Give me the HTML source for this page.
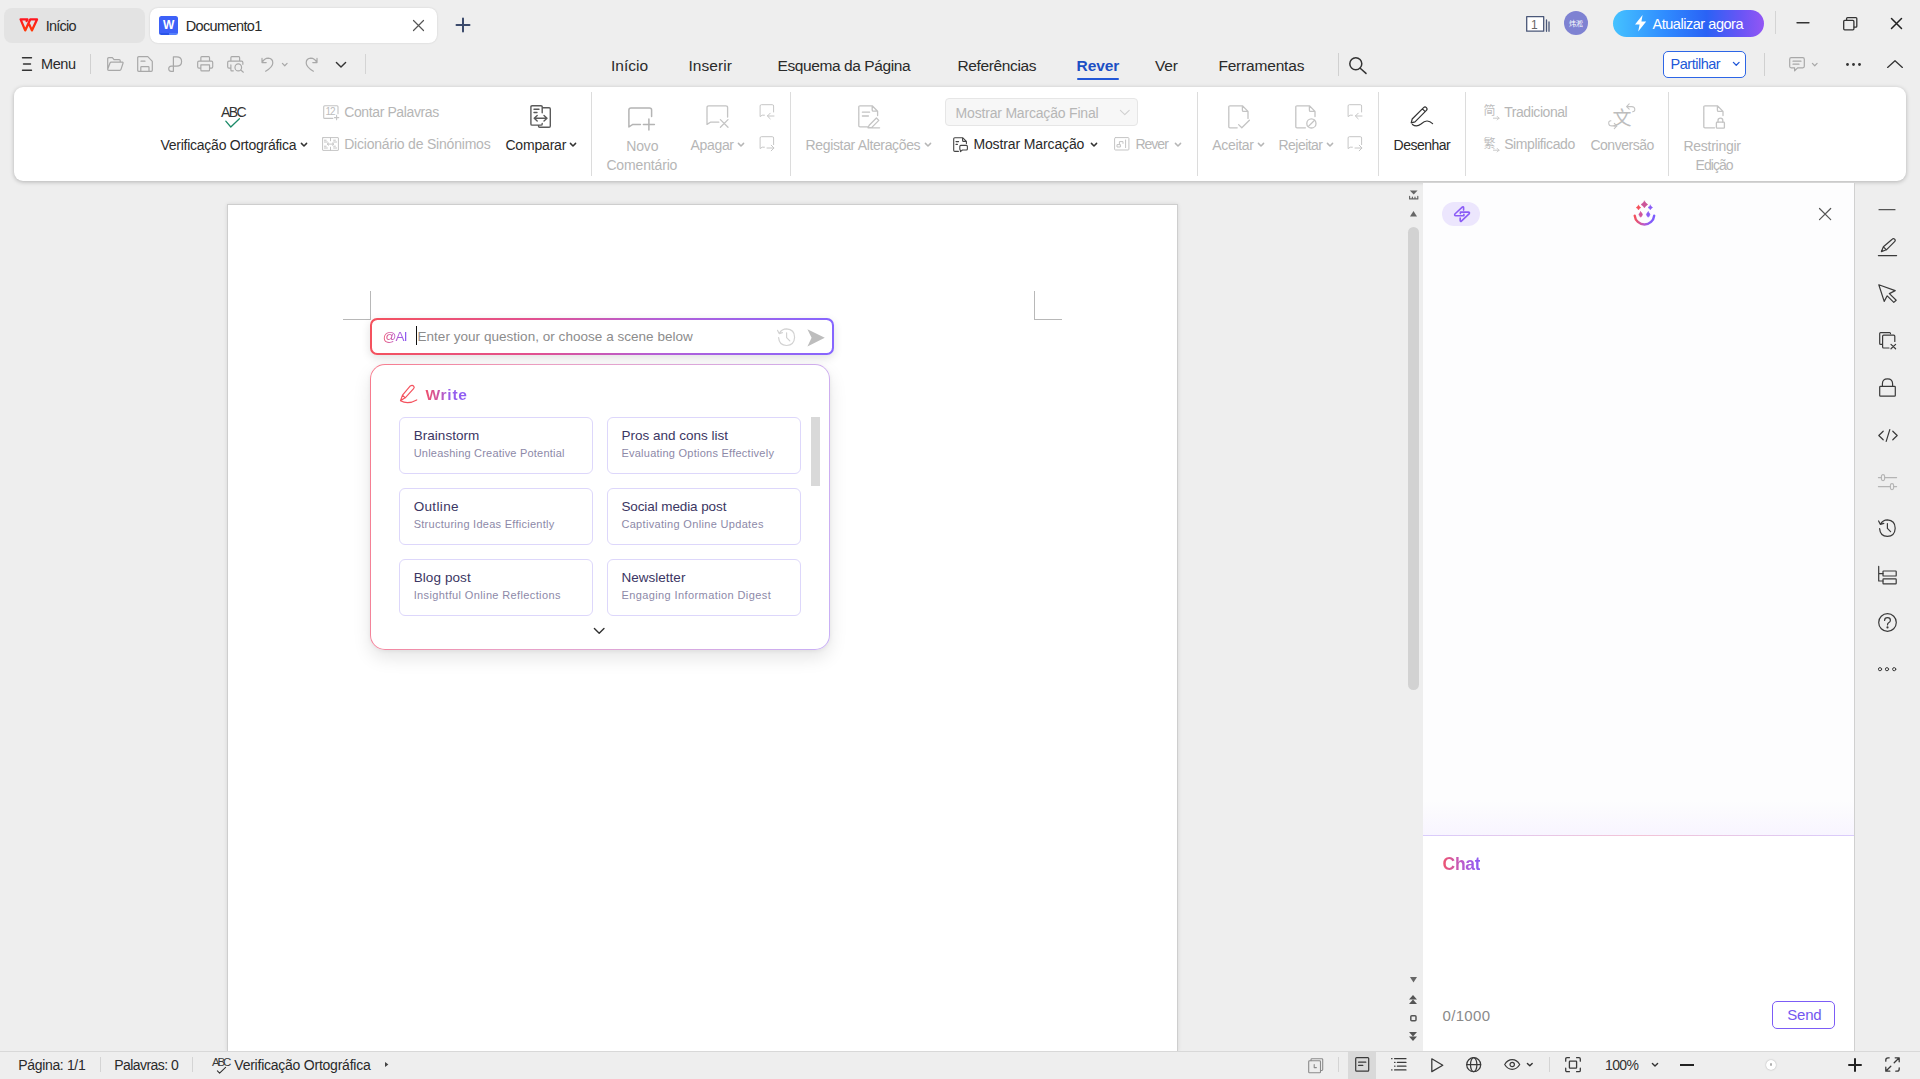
<!DOCTYPE html>
<html lang="pt">
<head>
<meta charset="utf-8">
<title>Documento1</title>
<style>
*{box-sizing:border-box;margin:0;padding:0}
html,body{width:1920px;height:1079px;overflow:hidden;background:#eeeeee;font-family:"Liberation Sans","Noto Sans CJK SC",sans-serif;color:#1f1f1f}
.abs{position:absolute}
.t{position:absolute;white-space:nowrap}
svg{position:absolute;overflow:visible}
.grad{background:linear-gradient(90deg,#ee5470 0%,#b85bd0 55%,#8a5cf6 100%);-webkit-background-clip:text;background-clip:text;color:transparent !important}
</style>
</head>
<body>
<!-- title bar -->
<div class="abs" style="left:4.0px;top:8.0px;width:141.0px;height:35.0px;background:#e3e3e3;border-radius:8px"></div>
<div class="abs" style="left:150.0px;top:8.0px;width:287.0px;height:35.0px;background:#fff;border-radius:8px;box-shadow:0 0 2px rgba(0,0,0,.15)"></div>
<svg style="left:19.0px;top:18.0px" width="19.5" height="14" viewBox="0 0 19.5 14" fill="none" stroke="url(#wg)" stroke-width="2.3" stroke-linecap="round" stroke-linejoin="round" ><defs><linearGradient id="wg" x1="0" y1="0" x2="0" y2="1"><stop offset="0" stop-color="#ff1720"/><stop offset="1" stop-color="#ff3a0a"/></linearGradient></defs><path d="M7.6 3 L8.4 1.4 H1.6 L6.2 12.4 L11.2 1.4 H18 L12.9 12.4 L10.2 6.4"/></svg>
<div class="t" style="left:45.7px;top:18.73px;font-size:14.50px;height:14.50px;line-height:14.50px;color:#2a2a2a;letter-spacing:-0.771px;">Início</div>
<div class="abs" style="left:159.0px;top:16.0px;width:19.0px;height:19.0px;background:linear-gradient(180deg,#3d61f8 0%,#3d61f8 90%,transparent 90%),linear-gradient(90deg,#2a55e8 0%,#2a55e8 52%,#5580fa 52%,#5580fa 100%);border-radius:2.5px"></div>
<div class="t" style="left:163.0px;top:18.84px;font-size:12.00px;height:12.00px;line-height:12.00px;color:#fff;font-weight:700;">W</div>
<div class="t" style="left:185.7px;top:18.73px;font-size:14.50px;height:14.50px;line-height:14.50px;color:#2a2a2a;letter-spacing:-0.623px;">Documento1</div>
<svg style="left:413.0px;top:19.5px" width="11" height="11" viewBox="0 0 11 11" fill="none" stroke="#555" stroke-width="1.2" stroke-linecap="round" stroke-linejoin="round" ><path d="M0.5 0.5 L10.5 10.5 M10.5 0.5 L0.5 10.5"/></svg>
<svg style="left:456.0px;top:18.0px" width="14" height="14" viewBox="0 0 14 14" fill="none" stroke="#3b4a6b" stroke-width="2" stroke-linecap="round" stroke-linejoin="round" ><path d="M7 0.5 V13.5 M0.5 7 H13.5"/></svg>
<svg style="left:1526.0px;top:16.0px" width="24" height="16" viewBox="0 0 24 16" fill="none" stroke="#4a5778" stroke-width="1.3" stroke-linecap="round" stroke-linejoin="round" ><rect x="0.7" y="0.7" width="17" height="14.5" fill="#fff"/><path d="M20.5 4 V15.3 M23 6 V15.3" /></svg>
<div class="t" style="left:1531.0px;top:18.84px;font-size:12.00px;height:12.00px;line-height:12.00px;color:#666;">1</div>
<div class="abs" style="left:1564.0px;top:11.0px;width:24.0px;height:24.0px;background:#7e82d2;border-radius:50%"></div>
<div class="t" style="left:1569.0px;top:20.07px;font-size:7.00px;height:7.00px;line-height:7.00px;color:#fff;font-family:"Noto Sans CJK SC",sans-serif;">炜淞</div>
<div class="abs" style="left:1613.0px;top:10.0px;width:151.0px;height:27.0px;border-radius:14px;background:linear-gradient(90deg,#45c2ff 0%,#2f8bff 35%,#2a62f5 62%,#6a55f5 85%,#9356f4 100%)"></div>
<svg style="left:1634.0px;top:15.0px" width="13" height="16.5" viewBox="0 0 13 16.5" fill="none" stroke="none" stroke-width="1.2" stroke-linecap="round" stroke-linejoin="round" ><path d="M8.6 0 L1 9.4 H5.6 L4.2 16.5 L12.2 6.6 H7.4 Z" fill="#fff" stroke="none"/></svg>
<div class="t" style="left:1652.5px;top:16.73px;font-size:14.50px;height:14.50px;line-height:14.50px;color:#fff;letter-spacing:-0.466px;">Atualizar agora</div>
<div class="abs" style="left:1775.0px;top:11.0px;width:1.0px;height:23.0px;background:#d4d4d4"></div>
<svg style="left:1796.5px;top:22.0px" width="12" height="1.4" viewBox="0 0 12 1.4" fill="none" stroke="#333" stroke-width="1.4" stroke-linecap="round" stroke-linejoin="round" ><path d="M0 0.7 H12"/></svg>
<svg style="left:1842.5px;top:16.5px" width="14.5" height="13.5" viewBox="0 0 14.5 13.5" fill="none" stroke="#333" stroke-width="1.3" stroke-linecap="round" stroke-linejoin="round" ><path d="M3.6 3.2 V1.6 Q3.6 0.7 4.5 0.7 H12.9 Q13.8 0.7 13.8 1.6 V9.2 Q13.8 10.1 12.9 10.1 H11.2"/><rect x="0.7" y="3.4" width="10.2" height="9.4" rx="1"/></svg>
<svg style="left:1891.0px;top:18.0px" width="11" height="11" viewBox="0 0 11 11" fill="none" stroke="#222" stroke-width="1.5" stroke-linecap="round" stroke-linejoin="round" ><path d="M0.5 0.5 L10.5 10.5 M10.5 0.5 L0.5 10.5"/></svg>
<!-- menu row -->
<svg style="left:22.0px;top:56.5px" width="10" height="14" viewBox="0 0 10 14" fill="none" stroke="#333" stroke-width="1.4" stroke-linecap="round" stroke-linejoin="round" ><path d="M0.5 0.7 H9.5 M1.5 7 H8.5 M0.5 13.3 H9.5"/></svg>
<div class="t" style="left:41.0px;top:56.73px;font-size:14.50px;height:14.50px;line-height:14.50px;color:#2a2a2a;letter-spacing:-0.423px;">Menu</div>
<div class="abs" style="left:90.0px;top:54.0px;width:1.0px;height:20.0px;background:#d0d0d0"></div>
<svg style="left:107.0px;top:57.0px" width="17" height="14" viewBox="0 0 17 14" fill="none" stroke="#a8a8a8" stroke-width="1.2" stroke-linecap="round" stroke-linejoin="round" ><path d="M0.7 12.3 V1.7 Q0.7 0.7 1.7 0.7 H5.4 L7 2.6 H12.2 Q13.2 2.6 13.2 3.6 V5.2 M0.7 12.3 L3 6 Q3.3 5.2 4.2 5.2 H15.4 Q16.4 5.2 16 6.2 L14 12.4 Q13.7 13.3 12.8 13.3 H1.7 Q0.7 13.3 0.7 12.3 Z"/></svg>
<svg style="left:137.0px;top:56.0px" width="16" height="16" viewBox="0 0 16 16" fill="none" stroke="#a8a8a8" stroke-width="1.2" stroke-linecap="round" stroke-linejoin="round" ><path d="M0.7 1.7 Q0.7 0.7 1.7 0.7 H10.8 L15.3 5.4 V14.3 Q15.3 15.3 14.3 15.3 H1.7 Q0.7 15.3 0.7 14.3 Z M3.8 15.1 V11.4 Q3.8 10.6 4.6 10.6 H11.2 Q12 10.6 12 11.4 V15.1 M4 5.2 H8"/></svg>
<svg style="left:168.0px;top:56.0px" width="14.5" height="16" viewBox="0 0 14.5 16" fill="none" stroke="#a8a8a8" stroke-width="1.2" stroke-linecap="round" stroke-linejoin="round" ><path d="M5.4 15.3 V0.8 H8.6 Q13.6 0.8 13.6 5.4 Q13.6 10.2 8.6 10.2 H3.4 Q0.7 10.2 0.7 12.8 Q0.7 15.3 3.2 15.3 H5.4"/></svg>
<svg style="left:197.0px;top:56.3px" width="16.4" height="15.6" viewBox="0 0 17 15" fill="none" stroke="#a8a8a8" stroke-width="1.2" stroke-linecap="round" stroke-linejoin="round" preserveAspectRatio="none"><path d="M4 5 V1.6 Q4 0.7 4.9 0.7 H12.1 Q13 0.7 13 1.6 V5 M4 11.6 H2 Q0.7 11.6 0.7 10.3 V6.3 Q0.7 5 2 5 H15 Q16.3 5 16.3 6.3 V10.3 Q16.3 11.6 15 11.6 H13 M4 8.6 H13 V13.4 Q13 14.3 12.1 14.3 H4.9 Q4 14.3 4 13.4 Z"/></svg>
<svg style="left:227.0px;top:56.3px" width="17.5" height="16.6" viewBox="0 0 18 16" fill="none" stroke="#a8a8a8" stroke-width="1.2" stroke-linecap="round" stroke-linejoin="round" preserveAspectRatio="none"><path d="M4 5 V1.6 Q4 0.7 4.9 0.7 H12.1 Q13 0.7 13 1.6 V5 M4 11.6 H2 Q0.7 11.6 0.7 10.3 V6.3 Q0.7 5 2 5 H15 Q16.3 5 16.3 6.3 V8 M4 8.6 V13.4 Q4 14.3 4.9 14.3 H6.5"/><circle cx="11.6" cy="11" r="3.4"/><path d="M14.2 13.6 L16.8 15.6"/></svg>
<svg style="left:261.0px;top:57.0px" width="13" height="15" viewBox="0 0 13 15" fill="none" stroke="#a8a8a8" stroke-width="1.2" stroke-linecap="round" stroke-linejoin="round" ><path d="M1 1.4 V5.6 H5.2 M1.2 5.4 Q3.4 1.2 7.2 1.2 Q11.8 1.4 11.8 6 Q11.8 10 4.6 14.2"/></svg>
<svg style="left:282.0px;top:63.0px" width="5.5" height="3.2" viewBox="0 0 5.5 3.2" fill="none" stroke="#a8a8a8" stroke-width="1.2" stroke-linecap="round" stroke-linejoin="round" ><path d="M0.4 0.4 L2.75 2.8 L5.1 0.4"/></svg>
<svg style="left:305.0px;top:57.0px" width="13" height="15" viewBox="0 0 13 15" fill="none" stroke="#a8a8a8" stroke-width="1.2" stroke-linecap="round" stroke-linejoin="round" ><path d="M12 1.4 V5.6 H7.8 M11.8 5.4 Q9.6 1.2 5.8 1.2 Q1.2 1.4 1.2 6 Q1.2 10 8.4 14.2"/></svg>
<svg style="left:336.0px;top:62.0px" width="10" height="5.5" viewBox="0 0 10 5.5" fill="none" stroke="#333" stroke-width="1.4" stroke-linecap="round" stroke-linejoin="round" ><path d="M0.4 0.4 L5 5.1 L9.6 0.4"/></svg>
<div class="abs" style="left:365.0px;top:54.0px;width:1.0px;height:20.0px;background:#d4d4d4"></div>
<div class="t" style="left:611.0px;top:57.88px;font-size:15.50px;height:15.50px;line-height:15.50px;color:#2a2a2a;letter-spacing:-0.009px;">Início</div>
<div class="t" style="left:688.4px;top:57.88px;font-size:15.50px;height:15.50px;line-height:15.50px;color:#2a2a2a;letter-spacing:0.090px;">Inserir</div>
<div class="t" style="left:777.5px;top:57.88px;font-size:15.50px;height:15.50px;line-height:15.50px;color:#2a2a2a;letter-spacing:-0.412px;">Esquema da Página</div>
<div class="t" style="left:957.5px;top:57.88px;font-size:15.50px;height:15.50px;line-height:15.50px;color:#2a2a2a;letter-spacing:-0.370px;">Referências</div>
<div class="t" style="left:1076.6px;top:57.88px;font-size:15.50px;height:15.50px;line-height:15.50px;color:#1c4fc4;letter-spacing:-0.121px;font-weight:700;">Rever</div>
<div class="abs" style="left:1077.0px;top:78.0px;width:42.0px;height:2.2px;background:#2257d6;border-radius:1px"></div>
<div class="t" style="left:1155.0px;top:57.88px;font-size:15.50px;height:15.50px;line-height:15.50px;color:#2a2a2a;letter-spacing:-0.132px;">Ver</div>
<div class="t" style="left:1218.4px;top:57.88px;font-size:15.50px;height:15.50px;line-height:15.50px;color:#2a2a2a;letter-spacing:-0.185px;">Ferramentas</div>
<div class="abs" style="left:1337.5px;top:52.5px;width:1.0px;height:23.0px;background:#d0d0d0"></div>
<svg style="left:1349.0px;top:56.5px" width="18" height="17" viewBox="0 0 18 17" fill="none" stroke="#333" stroke-width="1.5" stroke-linecap="round" stroke-linejoin="round" ><circle cx="6.8" cy="6.8" r="6"/><path d="M11.2 11.2 L17 16.4"/></svg>
<div class="abs" style="left:1662.5px;top:50.5px;width:83.5px;height:27.5px;background:#fff;border:1.5px solid #2d66e6;border-radius:5px"></div>
<div class="t" style="left:1670.6px;top:56.73px;font-size:14.50px;height:14.50px;line-height:14.50px;color:#2158d8;letter-spacing:-0.499px;">Partilhar</div>
<svg style="left:1732.5px;top:61.5px" width="6.5" height="3.6" viewBox="0 0 6.5 3.6" fill="none" stroke="#2158d8" stroke-width="1.3" stroke-linecap="round" stroke-linejoin="round" ><path d="M0.4 0.4 L3.25 3.2 L6.1 0.4"/></svg>
<div class="abs" style="left:1763.5px;top:52.5px;width:1.0px;height:23.0px;background:#d0d0d0"></div>
<svg style="left:1789.0px;top:57.0px" width="16" height="15" viewBox="0 0 16 15" fill="none" stroke="#a8a8a8" stroke-width="1.2" stroke-linecap="round" stroke-linejoin="round" ><path d="M2.2 0.7 H13.8 Q15.3 0.7 15.3 2.2 V9.3 Q15.3 10.8 13.8 10.8 H8.6 L5.6 13.8 V10.8 H2.2 Q0.7 10.8 0.7 9.3 V2.2 Q0.7 0.7 2.2 0.7 Z M4 4.2 H12 M4 7.2 H10"/></svg>
<svg style="left:1812.0px;top:63.0px" width="5.5" height="3.2" viewBox="0 0 5.5 3.2" fill="none" stroke="#a8a8a8" stroke-width="1.2" stroke-linecap="round" stroke-linejoin="round" ><path d="M0.4 0.4 L2.75 2.8 L5.1 0.4"/></svg>
<svg style="left:1845.5px;top:62.5px" width="15" height="3" viewBox="0 0 15 3" fill="#333" stroke="none" stroke-width="1.2" stroke-linecap="round" stroke-linejoin="round" ><circle cx="1.5" cy="1.5" r="1.4"/><circle cx="7.5" cy="1.5" r="1.4"/><circle cx="13.5" cy="1.5" r="1.4"/></svg>
<svg style="left:1887.0px;top:59.5px" width="16" height="8" viewBox="0 0 16 8" fill="none" stroke="#333" stroke-width="1.3" stroke-linecap="round" stroke-linejoin="round" ><path d="M0.6 7.4 L8 0.8 L15.4 7.4"/></svg>
<!-- ribbon -->
<div class="abs" style="left:14.0px;top:87.0px;width:1892.0px;height:94.0px;background:#fff;border-radius:9px;box-shadow:0 1px 4px rgba(0,0,0,.25)"></div>
<div class="abs" style="left:590.9px;top:92.0px;width:1.0px;height:84.0px;background:#dcdcdc"></div>
<div class="abs" style="left:790.0px;top:92.0px;width:1.0px;height:84.0px;background:#dcdcdc"></div>
<div class="abs" style="left:1196.9px;top:92.0px;width:1.0px;height:84.0px;background:#dcdcdc"></div>
<div class="abs" style="left:1378.0px;top:92.0px;width:1.0px;height:84.0px;background:#dcdcdc"></div>
<div class="abs" style="left:1464.9px;top:92.0px;width:1.0px;height:84.0px;background:#dcdcdc"></div>
<div class="abs" style="left:1668.3px;top:92.0px;width:1.0px;height:84.0px;background:#dcdcdc"></div>
<div class="t" style="left:221.0px;top:105.15px;font-size:14.00px;height:14.00px;line-height:14.00px;color:#333;letter-spacing:-1.644px;transform-origin:left;">ABC</div>
<svg style="left:225.0px;top:118.0px" width="15" height="10" viewBox="0 0 15 10" fill="none" stroke="#1c8a68" stroke-width="1.3" stroke-linecap="round" stroke-linejoin="round" ><path d="M0.8 3.2 L5.8 9 L14.4 0.8"/></svg>
<div class="t" style="left:160.5px;top:138.15px;font-size:14.00px;height:14.00px;line-height:14.00px;color:#2a2a2a;letter-spacing:-0.255px;">Verificação Ortográfica</div>
<svg style="left:300.5px;top:142.8px" width="6" height="3.4" viewBox="0 0 6 3.4" fill="none" stroke="#333" stroke-width="1.5" stroke-linecap="round" stroke-linejoin="round" ><path d="M0.4 0.4 L3 3 L5.6 0.4"/></svg>
<svg style="left:323.0px;top:105.0px" width="16" height="15" viewBox="0 0 16 15" fill="none" stroke="#c4c4c4" stroke-width="1.1" stroke-linecap="round" stroke-linejoin="round" ><path d="M15 8.8 V1.7 Q15 0.7 14 0.7 H1.7 Q0.7 0.7 0.7 1.7 V12.4 Q0.7 13.4 1.7 13.4 H9.8 M11.4 12.6 H15.8 M13.6 10.4 V14.8"/></svg>
<div class="t" style="left:325.6px;top:106.53px;font-size:10.00px;height:10.00px;line-height:10.00px;color:#bdbdbd;letter-spacing:-1.122px;">12</div>
<div class="t" style="left:344.2px;top:105.15px;font-size:14.00px;height:14.00px;line-height:14.00px;color:#b6b6b6;letter-spacing:-0.384px;">Contar Palavras</div>
<svg style="left:322.0px;top:137.2px" width="17" height="14" viewBox="0 0 17 14" fill="none" stroke="#c4c4c4" stroke-width="1" stroke-linecap="round" stroke-linejoin="round" ><rect x="0.6" y="0.6" width="15.8" height="12.8" rx="0.4"/><path d="M8.5 0.6 V3.8 M8.5 10.2 V13.4 M2.4 3.2 H4.2 M2.4 5 H5.4 M2.4 9.2 H4.2 M2.4 11 H5.4 M11.6 3.2 H13.4 M11.6 5 H14.6 M11.6 9.2 H13.4 M11.6 11 H14.6 M5.4 7.1 H11.6 M6.6 6 L5.2 7.1 L6.6 8.2 M10.4 6 L11.8 7.1 L10.4 8.2"/></svg>
<div class="t" style="left:344.2px;top:137.15px;font-size:14.00px;height:14.00px;line-height:14.00px;color:#b6b6b6;letter-spacing:-0.203px;">Dicionário de Sinónimos</div>
<svg style="left:530.0px;top:105.0px" width="21.5" height="22.5" viewBox="0 0 21.5 22.5" fill="none" stroke="#5a5a5a" stroke-width="1.4" stroke-linecap="round" stroke-linejoin="round" ><path d="M12.2 7.8 V2 Q12.2 0.8 11 0.8 H2.1 Q0.9 0.8 0.9 2 V18.9 Q0.9 20.1 2.1 20.1 H11 Q12.2 20.1 12.2 18.9 V18.4 M13 2.8 H19.1 Q20.3 2.8 20.3 4 V21 Q20.3 22.2 19.1 22.2 H9.7 Q8.5 22.2 8.5 21 V20.4 M4 4.3 H9 M4 7.5 H7 M4.4 13.2 H16.8 M7.2 10.4 L4.2 13.2 L7.2 16 M14 10.4 L17 13.2 L14 16"/></svg>
<div class="t" style="left:505.4px;top:138.15px;font-size:14.00px;height:14.00px;line-height:14.00px;color:#2a2a2a;letter-spacing:-0.177px;">Comparar</div>
<svg style="left:569.7px;top:142.8px" width="6" height="3.4" viewBox="0 0 6 3.4" fill="none" stroke="#333" stroke-width="1.5" stroke-linecap="round" stroke-linejoin="round" ><path d="M0.4 0.4 L3 3 L5.6 0.4"/></svg>
<svg style="left:628.0px;top:106.5px" width="27" height="23.5" viewBox="0 0 27 23.5" fill="none" stroke="#b4b4b4" stroke-width="1.5" stroke-linecap="round" stroke-linejoin="round" ><path d="M23.6 9.5 V3 Q23.6 0.9 21.5 0.9 H3 Q0.9 0.9 0.9 3 V20 L4.8 17.4 H12.4 M15.4 17.4 H26.4 M20.9 11.9 V22.9"/></svg>
<div class="t" style="left:626.3px;top:139.15px;font-size:14.00px;height:14.00px;line-height:14.00px;color:#b6b6b6;letter-spacing:-0.160px;">Novo</div>
<div class="t" style="left:606.4px;top:158.15px;font-size:14.00px;height:14.00px;line-height:14.00px;color:#b6b6b6;letter-spacing:-0.151px;">Comentário</div>
<svg style="left:706.0px;top:105.0px" width="23" height="23" viewBox="0 0 23 23" fill="none" stroke="#c4c4c4" stroke-width="1.3" stroke-linecap="round" stroke-linejoin="round" ><path d="M21.6 12 V2.6 Q21.6 0.8 19.8 0.8 H2.8 Q1 0.8 1 2.6 V19.4 L4.4 17.2 H12.8 M14.4 14.6 L22 22.2 M22 14.6 L14.4 22.2"/></svg>
<div class="t" style="left:690.6px;top:138.15px;font-size:14.00px;height:14.00px;line-height:14.00px;color:#b6b6b6;letter-spacing:-0.348px;">Apagar</div>
<svg style="left:737.6px;top:142.8px" width="6" height="3.4" viewBox="0 0 6 3.4" fill="none" stroke="#b6b6b6" stroke-width="1.5" stroke-linecap="round" stroke-linejoin="round" ><path d="M0.4 0.4 L3 3 L5.6 0.4"/></svg>
<svg style="left:759.3px;top:104.2px" width="15.5" height="15.5" viewBox="0 0 15.5 15.5" fill="none" stroke="#c6c6c6" stroke-width="1" stroke-linecap="round" stroke-linejoin="round" ><path d="M14.6 8 V2 Q14.6 0.7 13.3 0.7 H2.4 Q1.1 0.7 1.1 2 V12.6 L3.2 11.2 H5.4 M8.6 12 H15 M11.2 9.2 L8.4 12 L11.2 14.8"/></svg>
<svg style="left:759.3px;top:136.3px" width="15.5" height="15.5" viewBox="0 0 15.5 15.5" fill="none" stroke="#c6c6c6" stroke-width="1" stroke-linecap="round" stroke-linejoin="round" ><path d="M14.6 8.6 V2 Q14.6 0.7 13.3 0.7 H2.4 Q1.1 0.7 1.1 2 V12.6 L3.2 11.2 H5.4 M8 12 H14.8 M12.2 9.2 L15 12 L12.2 14.8"/></svg>
<svg style="left:858.0px;top:105.0px" width="22" height="23.5" viewBox="0 0 22 23.5" fill="none" stroke="#c4c4c4" stroke-width="1.3" stroke-linecap="round" stroke-linejoin="round" ><path d="M10 21.8 H2 Q0.8 21.8 0.8 20.6 V2 Q0.8 0.8 2 0.8 H14.2 L19.6 6.2 V10.6 M14.2 0.8 V5 Q14.2 6.2 15.4 6.2 H19.6 M4.4 7.2 H11.6 M4.4 11 H10.4 M18.4 13 L20.8 15.4 L13.6 22.6 L10 22.6 L11.2 20.2 Z M10 22.8 H21.6"/></svg>
<div class="t" style="left:805.6px;top:138.15px;font-size:14.00px;height:14.00px;line-height:14.00px;color:#b6b6b6;letter-spacing:-0.355px;">Registar Alterações</div>
<svg style="left:924.7px;top:142.8px" width="6" height="3.4" viewBox="0 0 6 3.4" fill="none" stroke="#b6b6b6" stroke-width="1.5" stroke-linecap="round" stroke-linejoin="round" ><path d="M0.4 0.4 L3 3 L5.6 0.4"/></svg>
<div class="abs" style="left:944.5px;top:98.0px;width:193.0px;height:27.5px;background:#f7f7f7;border:1px solid #e6e6e6;border-radius:4px"></div>
<div class="t" style="left:955.6px;top:106.15px;font-size:14.00px;height:14.00px;line-height:14.00px;color:#b6b6b6;letter-spacing:-0.192px;">Mostrar Marcação Final</div>
<svg style="left:1120.0px;top:110.0px" width="9.6" height="5" viewBox="0 0 9.6 5" fill="none" stroke="#d0d0d0" stroke-width="1.1" stroke-linecap="round" stroke-linejoin="round" ><path d="M0.4 0.4 L4.8 4.6 L9.2 0.4"/></svg>
<svg style="left:953.0px;top:136.5px" width="15" height="15.2" viewBox="0 0 15 15.2" fill="none" stroke="#444" stroke-width="1.1" stroke-linecap="round" stroke-linejoin="round" ><path d="M5.4 14.4 H1.8 Q0.7 14.4 0.7 13.3 V1.8 Q0.7 0.7 1.8 0.7 H9.6 L13.4 4.4 V6.6 M9.6 0.7 V3.4 Q9.6 4.4 10.6 4.4 H13.4 M3 4.6 H5.6 M3 7.4 H4.4 M7.8 8.4 H13.4 Q14.4 8.4 14.4 9.4 V12 Q14.4 13 13.4 13 H9.4 L7.4 14.6 V13 Q6.8 13 6.8 12 V9.4 Q6.8 8.4 7.8 8.4 Z"/></svg>
<div class="t" style="left:973.4px;top:137.15px;font-size:14.00px;height:14.00px;line-height:14.00px;color:#2a2a2a;letter-spacing:-0.120px;">Mostrar Marcação</div>
<svg style="left:1091.0px;top:142.8px" width="6" height="3.4" viewBox="0 0 6 3.4" fill="none" stroke="#333" stroke-width="1.5" stroke-linecap="round" stroke-linejoin="round" ><path d="M0.4 0.4 L3 3 L5.6 0.4"/></svg>
<svg style="left:1114.3px;top:137.2px" width="15.5" height="13.6" viewBox="0 0 15.5 13.6" fill="none" stroke="#c4c4c4" stroke-width="1" stroke-linecap="round" stroke-linejoin="round" ><rect x="0.6" y="0.6" width="14.3" height="12.4" rx="0.8"/><path d="M3 9.6 V7.6 H6.4 V9.6 Z M5.4 7.4 V4.6 H9 V6.4 M11.6 3 V10.6"/></svg>
<div class="t" style="left:1135.4px;top:137.15px;font-size:14.00px;height:14.00px;line-height:14.00px;color:#b6b6b6;letter-spacing:-0.986px;">Rever</div>
<svg style="left:1175.0px;top:142.8px" width="6" height="3.4" viewBox="0 0 6 3.4" fill="none" stroke="#b6b6b6" stroke-width="1.5" stroke-linecap="round" stroke-linejoin="round" ><path d="M0.4 0.4 L3 3 L5.6 0.4"/></svg>
<svg style="left:1228.2px;top:105.0px" width="22" height="24" viewBox="0 0 22 24" fill="none" stroke="#c4c4c4" stroke-width="1.3" stroke-linecap="round" stroke-linejoin="round" ><path d="M2 22.8 Q0.8 22.8 0.8 21.6 V2 Q0.8 0.8 2 0.8 H14.4 L20 6.4 M14.4 0.8 V5.2 Q14.4 6.4 15.6 6.4 H20 V13.4 M2 22.8 H9.2 M10.6 19.6 L13.8 22.8 L21.4 15.2"/></svg>
<div class="t" style="left:1212.3px;top:138.15px;font-size:14.00px;height:14.00px;line-height:14.00px;color:#b6b6b6;letter-spacing:-0.328px;">Aceitar</div>
<svg style="left:1257.7px;top:142.8px" width="6" height="3.4" viewBox="0 0 6 3.4" fill="none" stroke="#b6b6b6" stroke-width="1.5" stroke-linecap="round" stroke-linejoin="round" ><path d="M0.4 0.4 L3 3 L5.6 0.4"/></svg>
<svg style="left:1295.2px;top:105.0px" width="22" height="24" viewBox="0 0 22 24" fill="none" stroke="#c4c4c4" stroke-width="1.3" stroke-linecap="round" stroke-linejoin="round" ><path d="M2 22.8 Q0.8 22.8 0.8 21.6 V2 Q0.8 0.8 2 0.8 H14.4 L20 6.4 M14.4 0.8 V5.2 Q14.4 6.4 15.6 6.4 H20 V11.6 M2 22.8 H10.4"/><circle cx="16.4" cy="18.4" r="4.6"/><path d="M13.2 21.6 L19.6 15.2"/></svg>
<div class="t" style="left:1278.5px;top:138.15px;font-size:14.00px;height:14.00px;line-height:14.00px;color:#b6b6b6;letter-spacing:-0.534px;">Rejeitar</div>
<svg style="left:1326.8px;top:142.8px" width="6" height="3.4" viewBox="0 0 6 3.4" fill="none" stroke="#b6b6b6" stroke-width="1.5" stroke-linecap="round" stroke-linejoin="round" ><path d="M0.4 0.4 L3 3 L5.6 0.4"/></svg>
<svg style="left:1347.2px;top:104.2px" width="15.5" height="15.5" viewBox="0 0 15.5 15.5" fill="none" stroke="#c6c6c6" stroke-width="1" stroke-linecap="round" stroke-linejoin="round" ><path d="M14.6 8 V2 Q14.6 0.7 13.3 0.7 H2.4 Q1.1 0.7 1.1 2 V12.6 L3.2 11.2 H5.4 M8.6 12 H15 M11.2 9.2 L8.4 12 L11.2 14.8"/></svg>
<svg style="left:1347.2px;top:136.3px" width="15.5" height="15.5" viewBox="0 0 15.5 15.5" fill="none" stroke="#c6c6c6" stroke-width="1" stroke-linecap="round" stroke-linejoin="round" ><path d="M14.6 8.6 V2 Q14.6 0.7 13.3 0.7 H2.4 Q1.1 0.7 1.1 2 V12.6 L3.2 11.2 H5.4 M8 12 H14.8 M12.2 9.2 L15 12 L12.2 14.8"/></svg>
<svg style="left:1410.0px;top:106.0px" width="24" height="21.5" viewBox="0 0 24 21.5" fill="none" stroke="#333" stroke-width="1.2" stroke-linecap="round" stroke-linejoin="round" ><path d="M13.6 1.6 Q15 0.2 16.4 1.6 Q17.8 3 16.4 4.4 L5 15.8 L1.2 16.8 L2.2 13 Z M12.4 2.8 L15.2 5.6 M2.4 18.4 Q6.6 21.6 11 18 Q14.6 14.8 17.2 15 Q20 15.2 22.6 17.6"/></svg>
<div class="t" style="left:1393.6px;top:138.15px;font-size:14.00px;height:14.00px;line-height:14.00px;color:#2a2a2a;letter-spacing:-0.528px;">Desenhar</div>
<div class="t" style="left:1483.5px;top:104.84px;font-size:12.00px;height:12.00px;line-height:12.00px;color:#bdbdbd;font-family:"Noto Sans CJK SC",sans-serif;">简</div>
<svg style="left:1492.5px;top:116.0px" width="6.5" height="4.4" viewBox="0 0 6.5 4.4" fill="none" stroke="#c4c4c4" stroke-width="0.9" stroke-linecap="round" stroke-linejoin="round" ><path d="M0.4 2.2 H6 M4.2 0.4 L6 2.2 L4.2 4"/></svg>
<div class="t" style="left:1504.2px;top:105.15px;font-size:14.00px;height:14.00px;line-height:14.00px;color:#b6b6b6;letter-spacing:-0.445px;">Tradicional</div>
<div class="t" style="left:1483.5px;top:137.84px;font-size:12.00px;height:12.00px;line-height:12.00px;color:#bdbdbd;font-family:"Noto Sans CJK TC","Noto Sans CJK SC",sans-serif;">繁</div>
<svg style="left:1492.5px;top:148.4px" width="6.5" height="4.4" viewBox="0 0 6.5 4.4" fill="none" stroke="#c4c4c4" stroke-width="0.9" stroke-linecap="round" stroke-linejoin="round" ><path d="M0.4 2.2 H6 M4.2 0.4 L6 2.2 L4.2 4"/></svg>
<div class="t" style="left:1504.2px;top:137.15px;font-size:14.00px;height:14.00px;line-height:14.00px;color:#b6b6b6;letter-spacing:-0.407px;">Simplificado</div>
<div class="t" style="left:1612.5px;top:108.92px;font-size:19.00px;height:19.00px;line-height:19.00px;color:#bdbdbd;font-family:"Noto Sans CJK SC",sans-serif;">文</div>
<svg style="left:1626.0px;top:103.0px" width="9.5" height="9.5" viewBox="0 0 9.5 9.5" fill="none" stroke="#c4c4c4" stroke-width="1.1" stroke-linecap="round" stroke-linejoin="round" ><path d="M0.6 3.6 H5.6 Q8.8 3.6 8.8 6.6 Q8.8 8.8 6.6 8.8 M3.2 0.8 L0.6 3.6 L3.2 6.2"/></svg>
<svg style="left:1608.0px;top:120.0px" width="9.5" height="9.5" viewBox="0 0 9.5 9.5" fill="none" stroke="#c4c4c4" stroke-width="1.1" stroke-linecap="round" stroke-linejoin="round" ><path d="M8.9 5.9 H3.9 Q0.7 5.9 0.7 2.9 Q0.7 0.7 2.9 0.7 M6.3 3.3 L8.9 5.9 L6.3 8.7"/></svg>
<div class="t" style="left:1590.4px;top:138.15px;font-size:14.00px;height:14.00px;line-height:14.00px;color:#b6b6b6;letter-spacing:-0.462px;">Conversão</div>
<svg style="left:1703.0px;top:105.0px" width="22" height="24" viewBox="0 0 22 24" fill="none" stroke="#c4c4c4" stroke-width="1.3" stroke-linecap="round" stroke-linejoin="round" ><path d="M2 22.8 Q0.8 22.8 0.8 21.6 V2 Q0.8 0.8 2 0.8 H14.4 L20 6.4 M14.4 0.8 V5.2 Q14.4 6.4 15.6 6.4 H20 V10.6 M2 22.8 H11.6"/><rect x="13.4" y="17.2" width="8" height="6" rx="0.8"/><path d="M15 17.2 V15.4 Q15 13.2 17.4 13.2 Q19.8 13.2 19.8 15.4 V17.2"/></svg>
<div class="t" style="left:1683.4px;top:139.15px;font-size:14.00px;height:14.00px;line-height:14.00px;color:#b6b6b6;letter-spacing:-0.256px;">Restringir</div>
<div class="t" style="left:1695.6px;top:158.15px;font-size:14.00px;height:14.00px;line-height:14.00px;color:#b6b6b6;letter-spacing:-0.961px;">Edição</div>
<!-- document -->
<div class="abs" style="left:227.0px;top:204.0px;width:951.0px;height:848.0px;background:#fff;border:1px solid #cecece;border-bottom:none;box-shadow:0 0 4px rgba(0,0,0,.10)"></div>
<div class="abs" style="left:370.0px;top:291.0px;width:1.0px;height:29.0px;background:#b8b8b8"></div>
<div class="abs" style="left:343.0px;top:319.0px;width:28.0px;height:1.0px;background:#b8b8b8"></div>
<div class="abs" style="left:1034.0px;top:291.0px;width:1.0px;height:29.0px;background:#b8b8b8"></div>
<div class="abs" style="left:1034.0px;top:319.0px;width:28.0px;height:1.0px;background:#b8b8b8"></div>
<div class="abs" style="left:370.0px;top:318.0px;width:464.0px;height:37.0px;border-radius:7px;background:linear-gradient(90deg,#f4525e 0%,#e2508f 35%,#b45fd6 62%,#8666ff 100%);box-shadow:0 3px 10px rgba(0,0,0,.12)"></div>
<div class="abs" style="left:371.8px;top:319.8px;width:460.4px;height:33.4px;border-radius:5.5px;background:#fff"></div>
<div class="t grad" style="left:382.8px;top:329.57px;font-size:13.50px;height:13.50px;line-height:13.50px;color:#e0508a;letter-spacing:-0.880px;">@AI</div>
<div class="abs" style="left:416.0px;top:326.0px;width:1.3px;height:18.5px;background:#111"></div>
<div class="t" style="left:417.5px;top:329.57px;font-size:13.50px;height:13.50px;line-height:13.50px;color:#8c8c8c;letter-spacing:0.033px;">Enter your question, or choose a scene below</div>
<svg style="left:776.8px;top:327.8px" width="18.5" height="18.5" viewBox="0 0 18.5 18.5" fill="none" stroke="#d2d2d2" stroke-width="1.2" stroke-linecap="round" stroke-linejoin="round" ><path d="M2.4 5.2 Q4.8 0.9 9.6 0.9 Q17.6 1.3 17.6 9.3 Q17.2 17.3 9.6 17.5 Q2.2 17.3 1.6 9.6 M0.6 2.4 L2.2 5.6 L5.4 4.6 M9.6 4.8 V9.6 L12.8 12.8"/></svg>
<svg style="left:807.2px;top:328.7px" width="18" height="17.6" viewBox="0 0 18 17.6" fill="none" stroke="none" stroke-width="1.2" stroke-linecap="round" stroke-linejoin="round" ><path d="M0.4 0.2 L17.8 8.8 L0.4 17.4 L4.6 8.8 Z" fill="#bdbdbd" stroke="none"/></svg>
<div class="abs" style="left:370.0px;top:364.0px;width:460.0px;height:286.0px;border-radius:15px;background:linear-gradient(100deg,#f77a8c 0%,#eaa0c4 35%,#c9b0f6 100%);box-shadow:0 8px 18px rgba(0,0,0,.10),0 1px 4px rgba(0,0,0,.06)"></div>
<div class="abs" style="left:371.0px;top:365.0px;width:458.0px;height:284.0px;border-radius:14px;background:#fff"></div>
<svg style="left:400.0px;top:384.5px" width="17.5" height="18.5" viewBox="0 0 17.5 18.5" fill="none" stroke="#f4525e" stroke-width="1.2" stroke-linecap="round" stroke-linejoin="round" ><path d="M10.3 0.9 Q12.4 -0.5 13.8 1.3 Q14.7 2.5 13.6 3.6 L5.2 12.8 L2.5 10.1 Z M2.5 10.1 L0.5 15.6 L5.2 12.8 M1.6 12.8 L0.5 15.6 L3 14.2 M0.5 15.7 Q8 19.8 16.7 14.9"/></svg>
<div class="t grad" style="left:425.4px;top:386.88px;font-size:15.50px;height:15.50px;line-height:15.50px;color:#e8547f;letter-spacing:0.783px;font-weight:700;background-image:linear-gradient(90deg,#f0506a 0%,#d257a0 28%,#9a5eea 55%,#8b5cf6 100%);">Write</div>
<div class="abs" style="left:399.3px;top:417.3px;width:193.6px;height:56.5px;border:1px solid #ddd7fb;border-radius:6px;background:#fff"></div>
<div class="t" style="left:413.7px;top:428.57px;font-size:13.50px;height:13.50px;line-height:13.50px;color:#3b3663;letter-spacing:0.038px;">Brainstorm</div>
<div class="t" style="left:413.7px;top:447.69px;font-size:11.00px;height:11.00px;line-height:11.00px;color:#8d89a8;letter-spacing:0.207px;">Unleashing Creative Potential</div>
<div class="abs" style="left:607.0px;top:417.3px;width:193.6px;height:56.5px;border:1px solid #ddd7fb;border-radius:6px;background:#fff"></div>
<div class="t" style="left:621.4px;top:428.57px;font-size:13.50px;height:13.50px;line-height:13.50px;color:#3b3663;letter-spacing:-0.003px;">Pros and cons list</div>
<div class="t" style="left:621.4px;top:447.69px;font-size:11.00px;height:11.00px;line-height:11.00px;color:#8d89a8;letter-spacing:0.248px;">Evaluating Options Effectively</div>
<div class="abs" style="left:399.3px;top:488.3px;width:193.6px;height:56.5px;border:1px solid #ddd7fb;border-radius:6px;background:#fff"></div>
<div class="t" style="left:413.7px;top:499.57px;font-size:13.50px;height:13.50px;line-height:13.50px;color:#3b3663;letter-spacing:0.338px;">Outline</div>
<div class="t" style="left:413.7px;top:518.69px;font-size:11.00px;height:11.00px;line-height:11.00px;color:#8d89a8;letter-spacing:0.265px;">Structuring Ideas Efficiently</div>
<div class="abs" style="left:607.0px;top:488.3px;width:193.6px;height:56.5px;border:1px solid #ddd7fb;border-radius:6px;background:#fff"></div>
<div class="t" style="left:621.4px;top:499.57px;font-size:13.50px;height:13.50px;line-height:13.50px;color:#3b3663;letter-spacing:-0.097px;">Social media post</div>
<div class="t" style="left:621.4px;top:518.69px;font-size:11.00px;height:11.00px;line-height:11.00px;color:#8d89a8;letter-spacing:0.324px;">Captivating Online Updates</div>
<div class="abs" style="left:399.3px;top:559.3px;width:193.6px;height:56.5px;border:1px solid #ddd7fb;border-radius:6px;background:#fff"></div>
<div class="t" style="left:413.7px;top:570.57px;font-size:13.50px;height:13.50px;line-height:13.50px;color:#3b3663;letter-spacing:0.089px;">Blog post</div>
<div class="t" style="left:413.7px;top:589.69px;font-size:11.00px;height:11.00px;line-height:11.00px;color:#8d89a8;letter-spacing:0.370px;">Insightful Online Reflections</div>
<div class="abs" style="left:607.0px;top:559.3px;width:193.6px;height:56.5px;border:1px solid #ddd7fb;border-radius:6px;background:#fff"></div>
<div class="t" style="left:621.4px;top:570.57px;font-size:13.50px;height:13.50px;line-height:13.50px;color:#3b3663;letter-spacing:0.026px;">Newsletter</div>
<div class="t" style="left:621.4px;top:589.69px;font-size:11.00px;height:11.00px;line-height:11.00px;color:#8d89a8;letter-spacing:0.404px;">Engaging Information Digest</div>
<div class="abs" style="left:811.0px;top:417.0px;width:9.0px;height:69.0px;background:#d9d9d9"></div>
<svg style="left:594.4px;top:628.2px" width="10.4" height="5.6" viewBox="0 0 10.4 5.6" fill="none" stroke="#333" stroke-width="1.4" stroke-linecap="round" stroke-linejoin="round" ><path d="M0.4 0.4 L5.2 5.2 L10 0.4"/></svg>
<svg style="left:1408.8px;top:189.5px" width="9.4" height="9.6" viewBox="0 0 9.4 9.6" fill="none" stroke="none" stroke-width="1.2" stroke-linecap="round" stroke-linejoin="round" ><path d="M0.8 0.4 H8.6 L4.7 4.6 Z" fill="#666" stroke="none"/><path d="M0.6 6.4 V8.9 H8.8 V6.4 M3.4 7 V8.6 M6 7 V8.6" stroke="#666" stroke-width="1.2" fill="none"/></svg>
<svg style="left:1410.0px;top:210.9px" width="7" height="5.4" viewBox="0 0 7 5.4" fill="none" stroke="none" stroke-width="1.2" stroke-linecap="round" stroke-linejoin="round" ><path d="M3.5 0 L7 5.4 H0 Z" fill="#666" stroke="none"/></svg>
<div class="abs" style="left:1408.0px;top:226.7px;width:11.0px;height:463.5px;background:#d2d2d2;border-radius:5.5px"></div>
<svg style="left:1409.5px;top:976.6px" width="7" height="5.4" viewBox="0 0 7 5.4" fill="none" stroke="none" stroke-width="1.2" stroke-linecap="round" stroke-linejoin="round" ><path d="M0 0 H7 L3.5 5.4 Z" fill="#666" stroke="none"/></svg>
<svg style="left:1409.0px;top:994.5px" width="8" height="9.4" viewBox="0 0 8 9.4" fill="none" stroke="none" stroke-width="1.2" stroke-linecap="round" stroke-linejoin="round" ><path d="M4 0 L8 4.4 H0 Z M4 4.6 L8 9 H0 Z" fill="#555" stroke="none"/></svg>
<svg style="left:1409.6px;top:1014.8px" width="6.8" height="6.6" viewBox="0 0 6.8 6.6" fill="none" stroke="#555" stroke-width="1.5" stroke-linecap="round" stroke-linejoin="round" ><rect x="0.8" y="0.8" width="5.2" height="5" rx="1" /></svg>
<svg style="left:1409.0px;top:1032.0px" width="8" height="9.4" viewBox="0 0 8 9.4" fill="none" stroke="none" stroke-width="1.2" stroke-linecap="round" stroke-linejoin="round" ><path d="M0 0 H8 L4 4.4 Z M0 4.6 H8 L4 9 Z" fill="#555" stroke="none"/></svg>
<!-- ai side panel -->
<div class="abs" style="left:1423.0px;top:183.0px;width:431.0px;height:868.0px;background:#fdfdfe"></div>
<div class="abs" style="left:1423.0px;top:800.0px;width:431.0px;height:35.0px;background:linear-gradient(180deg,rgba(248,245,255,0) 0%,#f8f5ff 100%)"></div>
<div class="abs" style="left:1423.0px;top:834.6px;width:431.0px;height:216.4px;background:#fff"></div>
<div class="abs" style="left:1423.0px;top:834.6px;width:431.0px;height:1.2px;background:linear-gradient(90deg,#d9ccfc 0%,#f3c3d6 50%,#d9ccfc 100%)"></div>
<div class="abs" style="left:1854.0px;top:183.0px;width:1.0px;height:868.0px;background:#d0d0d0"></div>
<div class="abs" style="left:1442.0px;top:202.0px;width:38.0px;height:24.0px;background:#ece6fd;border-radius:12px"></div>
<svg style="left:1453.5px;top:206.4px" width="16.4" height="16" viewBox="0 0 16.4 16" fill="none" stroke="#8b5cf6" stroke-width="1.6" stroke-linecap="round" stroke-linejoin="round" ><path d="M9.6 4.1 V1.7 Q9.6 0.3 8.5 0.9 L0.9 8 Q0.1 9.7 1.7 9.7 H9.9 V8.2 M6.2 12.1 V14.5 Q6.3 15.8 7.4 15.2 L15.3 7.7 Q15.9 6.1 14.3 6.1 H6.4 V7.6"/></svg>
<svg style="left:1633.0px;top:200.0px" width="23" height="26" viewBox="0 0 23 26" fill="none" stroke="none" stroke-width="1.2" stroke-linecap="round" stroke-linejoin="round" ><defs><linearGradient id="sg" x1="0" y1="0" x2="1" y2="0"><stop offset="0" stop-color="#f4505a"/><stop offset="0.5" stop-color="#b85bd0"/><stop offset="0.75" stop-color="#8a5cf6"/><stop offset="1" stop-color="#7a5cff"/></linearGradient></defs><path d="M1.7 15.7 A9.8 9.8 0 0 0 21.2 15.7" stroke="url(#sg)" stroke-width="2.4" fill="none"/><path d="M11.4 1.2 Q12.6 3.3 14.7 4.5 Q12.6 5.7 11.4 7.8 Q10.2 5.7 8.1 4.5 Q10.2 3.3 11.4 1.2 Z" fill="#cc5599" stroke="#cc5599" stroke-width="0.6"/><path d="M5.5 5.3 Q6.3 6.8 7.8 7.6 Q6.3 8.4 5.5 9.9 Q4.7 8.4 3.2 7.6 Q4.7 6.8 5.5 5.3 Z" fill="#f4505a" stroke="#f4505a" stroke-width="0.5"/><path d="M17.3 5.2 Q18.1 6.7 19.6 7.5 Q18.1 8.3 17.3 9.8 Q16.5 8.3 15 7.5 Q16.5 6.7 17.3 5.2 Z" fill="#8b5cf6" stroke="#8b5cf6" stroke-width="0.5"/><path d="M7.7 11.7 Q9.1 12.7 9.5 14.5 Q9.1 16.3 7.7 17.3 Q6.3 16.3 5.9 14.5 Q6.3 12.7 7.7 11.7 Z" fill="#d0559a" stroke="#d0559a" stroke-width="0.5"/><path d="M15.2 11.7 Q16.6 12.7 17 14.5 Q16.6 16.3 15.2 17.3 Q13.8 16.3 13.4 14.5 Q13.8 12.7 15.2 11.7 Z" fill="#8b5cf6" stroke="#8b5cf6" stroke-width="0.5"/></svg>
<svg style="left:1819.0px;top:208.0px" width="12.2" height="12.2" viewBox="0 0 12.2 12.2" fill="none" stroke="#555" stroke-width="1.2" stroke-linecap="round" stroke-linejoin="round" ><path d="M0.5 0.5 L11.7 11.7 M11.7 0.5 L0.5 11.7"/></svg>
<div class="t grad" style="left:1442.5px;top:856.19px;font-size:17.50px;height:17.50px;line-height:17.50px;color:#e8547f;letter-spacing:-0.229px;font-weight:700;">Chat</div>
<div class="t" style="left:1442.5px;top:1008.30px;font-size:15.00px;height:15.00px;line-height:15.00px;color:#8a8a8a;letter-spacing:0.325px;">0/1000</div>
<div class="abs" style="left:1772.0px;top:1001.0px;width:63.0px;height:28.0px;background:#fff;border:1.5px solid #7c5cf6;border-radius:5px"></div>
<div class="t" style="left:1787.3px;top:1007.30px;font-size:15.00px;height:15.00px;line-height:15.00px;color:#7357f0;letter-spacing:-0.210px;">Send</div>
<!-- right icon bar -->
<svg style="left:1879.2px;top:209.0px" width="16" height="1.4" viewBox="0 0 16 1.4" fill="none" stroke="#555" stroke-width="1.3" stroke-linecap="round" stroke-linejoin="round" ><path d="M0 0.7 H16"/></svg>
<svg style="left:1878.0px;top:238.0px" width="19" height="18.5" viewBox="0 0 19 18.5" fill="none" stroke="#3a3a3a" stroke-width="1.2" stroke-linecap="round" stroke-linejoin="round" ><path d="M14.2 1.2 Q15.4 0 16.6 1.2 Q17.8 2.4 16.6 3.6 L8.4 11.8 L3.4 13.6 L5.4 8.8 Z M5.4 8.8 L8.4 11.8 M0.4 17.6 H18.6"/></svg>
<svg style="left:1878.0px;top:284.0px" width="19" height="19" viewBox="0 0 19 19" fill="none" stroke="#3a3a3a" stroke-width="1.2" stroke-linecap="round" stroke-linejoin="round" ><path d="M0.8 0.8 L17.2 6.6 L11.4 9.6 L18.2 16.2 L15.8 18.4 L9.2 11.8 L6.2 17.4 Z"/></svg>
<svg style="left:1879.0px;top:332.0px" width="18" height="17.5" viewBox="0 0 18 17.5" fill="none" stroke="#3a3a3a" stroke-width="1.2" stroke-linecap="round" stroke-linejoin="round" ><path d="M3.4 12.4 H1.6 Q0.7 12.4 0.7 11.5 V1.6 Q0.7 0.7 1.6 0.7 H10.6 Q11.5 0.7 11.5 1.6 M10 16 H4.6 Q3.6 16 3.6 15 V4.2 Q3.6 3.2 4.6 3.2 H14.8 Q15.8 3.2 15.8 4.2 V9.4 M12 12.4 L16.6 16.8 M16.6 12.4 L12 16.8"/></svg>
<svg style="left:1879.0px;top:378.0px" width="17" height="19" viewBox="0 0 17 19" fill="none" stroke="#3a3a3a" stroke-width="1.2" stroke-linecap="round" stroke-linejoin="round" ><rect x="0.7" y="8.4" width="15.6" height="9.8" rx="0.8"/><path d="M3.4 8.4 V5.8 Q3.4 0.8 8.5 0.8 Q13.6 0.8 13.6 5.8 V8.4"/></svg>
<svg style="left:1878.0px;top:428.5px" width="20" height="13" viewBox="0 0 20 13" fill="none" stroke="#3a3a3a" stroke-width="1.2" stroke-linecap="round" stroke-linejoin="round" ><path d="M5.2 2.2 L0.8 6.5 L5.2 10.8 M14.8 2.2 L19.2 6.5 L14.8 10.8 M11.8 0.6 L8.2 12.4"/></svg>
<svg style="left:1878.0px;top:473.5px" width="19" height="17" viewBox="0 0 19 17" fill="none" stroke="#b4b4b4" stroke-width="1.1" stroke-linecap="round" stroke-linejoin="round" ><path d="M0.4 3.6 H3.4 M6.6 3.6 H18.6 M0.4 12.6 H12.4 M15.6 12.6 H18.6"/><rect x="3.4" y="0.6" width="3.2" height="6" rx="1.6"/><rect x="12.4" y="9.6" width="3.2" height="6" rx="1.6"/></svg>
<svg style="left:1878.0px;top:518.5px" width="18" height="18.5" viewBox="0 0 18 18.5" fill="none" stroke="#3a3a3a" stroke-width="1.2" stroke-linecap="round" stroke-linejoin="round" ><path d="M2.6 5 Q4.8 0.8 9.4 0.8 Q17.2 1.2 17.2 9.2 Q16.8 17.2 9.4 17.4 Q2.2 17.2 1.6 9.6 M0.6 2 L2.4 5.4 L5.8 4.4 M9.4 4.6 V9.4 L12.6 12.6"/></svg>
<svg style="left:1878.0px;top:565.5px" width="19" height="19.5" viewBox="0 0 19 19.5" fill="none" stroke="#3a3a3a" stroke-width="1.2" stroke-linecap="round" stroke-linejoin="round" ><path d="M0.7 0.4 V15 H5 M0.7 7.6 H5"/><rect x="5" y="5" width="13.2" height="5" rx="0.6"/><rect x="5" y="12.8" width="13.2" height="5" rx="0.6"/></svg>
<svg style="left:1878.0px;top:612.8px" width="19" height="19" viewBox="0 0 19 19" fill="none" stroke="#3a3a3a" stroke-width="1.2" stroke-linecap="round" stroke-linejoin="round" ><circle cx="9.5" cy="9.5" r="8.8"/><path d="M6.6 7.4 Q6.6 4.6 9.5 4.6 Q12.4 4.6 12.4 7.2 Q12.4 8.8 10.6 9.8 Q9.5 10.4 9.5 12"/><circle cx="9.5" cy="14.4" r="0.5" fill="#3a3a3a"/></svg>
<svg style="left:1878.4px;top:667.2px" width="19" height="4.4" viewBox="0 0 19 4.4" fill="none" stroke="#3a3a3a" stroke-width="1" stroke-linecap="round" stroke-linejoin="round" ><circle cx="2" cy="2.2" r="1.6"/><circle cx="9" cy="2.2" r="1.6"/><circle cx="16.2" cy="2.2" r="1.6"/></svg>
<!-- status bar -->
<div class="abs" style="left:0.0px;top:1051.0px;width:1920.0px;height:28.0px;background:#eeeeee;border-top:1px solid #d8d8d8"></div>
<div class="t" style="left:18.3px;top:1058.15px;font-size:14.00px;height:14.00px;line-height:14.00px;color:#2a2a2a;letter-spacing:-0.343px;">Página: 1/1</div>
<div class="abs" style="left:100.0px;top:1057.0px;width:1.0px;height:15.0px;background:#d4d4d4"></div>
<div class="t" style="left:114.3px;top:1058.15px;font-size:14.00px;height:14.00px;line-height:14.00px;color:#2a2a2a;letter-spacing:-0.563px;">Palavras: 0</div>
<div class="abs" style="left:192.0px;top:1057.0px;width:1.0px;height:15.0px;background:#d4d4d4"></div>
<div class="t" style="left:212.0px;top:1057.27px;font-size:11.50px;height:11.50px;line-height:11.50px;color:#3a3a3a;letter-spacing:-2.173px;">ABC</div>
<svg style="left:217.0px;top:1067.0px" width="9" height="6.6" viewBox="0 0 9 6.6" fill="none" stroke="#333" stroke-width="1.1" stroke-linecap="round" stroke-linejoin="round" ><path d="M0.4 3.9 L2.6 6.1 L8.6 0.4"/></svg>
<div class="t" style="left:234.3px;top:1058.15px;font-size:14.00px;height:14.00px;line-height:14.00px;color:#2a2a2a;letter-spacing:-0.237px;">Verificação Ortográfica</div>
<svg style="left:385.0px;top:1062.3px" width="3.4" height="5" viewBox="0 0 3.4 5" fill="none" stroke="none" stroke-width="1.2" stroke-linecap="round" stroke-linejoin="round" ><path d="M0 0 L3.4 2.5 L0 5 Z" fill="#444" stroke="none"/></svg>
<svg style="left:1307.7px;top:1057.7px" width="15.5" height="15.5" viewBox="0 0 15.5 15.5" fill="none" stroke="#8a8a8a" stroke-width="1.1" stroke-linecap="round" stroke-linejoin="round" ><path d="M3 2.6 V1.6 Q3 0.7 3.9 0.7 H13.8 Q14.7 0.7 14.7 1.6 V11.6 Q14.7 12.5 13.8 12.5 H12.6"/><rect x="0.7" y="2.8" width="11.8" height="12" rx="0.9"/><path d="M6.2 6.6 V9.6 H8.4"/></svg>
<div class="abs" style="left:1338.0px;top:1057.0px;width:1.0px;height:15.0px;background:#d4d4d4"></div>
<div class="abs" style="left:1348.3px;top:1052.0px;width:27.4px;height:27.0px;background:#d9d9d9"></div>
<svg style="left:1355.0px;top:1057.3px" width="14.5" height="14.8" viewBox="0 0 14.5 14.8" fill="none" stroke="#3a3a3a" stroke-width="1.2" stroke-linecap="round" stroke-linejoin="round" ><rect x="0.7" y="0.7" width="13" height="13.4" rx="0.9"/><path d="M3.6 5.2 H10.8 M3.6 8.4 H7.8"/></svg>
<svg style="left:1390.7px;top:1058.3px" width="15.5" height="12.6" viewBox="0 0 15.5 12.6" fill="none" stroke="#3a3a3a" stroke-width="1.2" stroke-linecap="round" stroke-linejoin="round" ><path d="M3.6 0.7 H15 M0.6 0.7 H1 M6.4 4.4 H15 M3.6 4.4 H4 M6.4 8.2 H15 M3.6 8.2 H4 M3.6 11.9 H15 M0.6 11.9 H1"/></svg>
<svg style="left:1431.0px;top:1057.5px" width="12.5" height="14.4" viewBox="0 0 12.5 14.4" fill="none" stroke="#3a3a3a" stroke-width="1.3" stroke-linecap="round" stroke-linejoin="round" ><path d="M0.8 0.8 L11.8 7.2 L0.8 13.6 Z"/></svg>
<svg style="left:1466.0px;top:1057.0px" width="15.4" height="15.4" viewBox="0 0 15.4 15.4" fill="none" stroke="#3a3a3a" stroke-width="1.2" stroke-linecap="round" stroke-linejoin="round" ><circle cx="7.7" cy="7.7" r="7"/><ellipse cx="7.7" cy="7.7" rx="3.2" ry="7"/><path d="M0.7 7.7 H14.7"/></svg>
<svg style="left:1504.0px;top:1059.3px" width="16.4" height="11" viewBox="0 0 16.4 11" fill="none" stroke="#3a3a3a" stroke-width="1.2" stroke-linecap="round" stroke-linejoin="round" ><path d="M0.7 5.5 Q3.6 0.7 8.2 0.7 Q12.8 0.7 15.7 5.5 Q12.8 10.3 8.2 10.3 Q3.6 10.3 0.7 5.5 Z"/><circle cx="8.2" cy="5.5" r="2.2"/></svg>
<svg style="left:1526.7px;top:1063.0px" width="5.6" height="3.2" viewBox="0 0 5.6 3.2" fill="none" stroke="#333" stroke-width="1.4" stroke-linecap="round" stroke-linejoin="round" ><path d="M0.4 0.4 L2.8 2.8 L5.2 0.4"/></svg>
<div class="abs" style="left:1549.0px;top:1057.0px;width:1.0px;height:15.0px;background:#d4d4d4"></div>
<svg style="left:1565.0px;top:1056.7px" width="16" height="15.4" viewBox="0 0 16 15.4" fill="none" stroke="#3a3a3a" stroke-width="1.3" stroke-linecap="round" stroke-linejoin="round" ><path d="M0.7 4.2 V2 Q0.7 0.7 2 0.7 H4.4 M11.6 0.7 H14 Q15.3 0.7 15.3 2 V4.2 M15.3 11.2 V13.4 Q15.3 14.7 14 14.7 H11.6 M4.4 14.7 H2 Q0.7 14.7 0.7 13.4 V11.2"/><rect x="4.4" y="4.2" width="7.2" height="7" rx="0.6"/></svg>
<div class="t" style="left:1605.0px;top:1058.15px;font-size:14.00px;height:14.00px;line-height:14.00px;color:#333;letter-spacing:-0.602px;">100%</div>
<svg style="left:1651.7px;top:1063.0px" width="6" height="3.4" viewBox="0 0 6 3.4" fill="none" stroke="#333" stroke-width="1.4" stroke-linecap="round" stroke-linejoin="round" ><path d="M0.4 0.4 L3 3 L5.6 0.4"/></svg>
<div class="abs" style="left:1680.0px;top:1063.7px;width:14.0px;height:2.0px;background:#222"></div>
<div class="abs" style="left:1766.0px;top:1059.5px;width:10.0px;height:10.0px;background:#fff;border-radius:50%;box-shadow:0 0 1.5px rgba(0,0,0,.35)"></div>
<div class="abs" style="left:1769.8px;top:1063.3px;width:2.4px;height:2.4px;background:#b0b0b0;border-radius:50%"></div>
<svg style="left:1849.0px;top:1058.7px" width="12" height="12" viewBox="0 0 12 12" fill="none" stroke="#222" stroke-width="2" stroke-linecap="round" stroke-linejoin="round" ><path d="M6 0 V12 M0 6 H12"/></svg>
<svg style="left:1885.0px;top:1057.0px" width="15" height="15" viewBox="0 0 15 15" fill="none" stroke="#3a3a3a" stroke-width="1.3" stroke-linecap="round" stroke-linejoin="round" ><path d="M0.8 4.2 V3 Q0.8 0.8 3 0.8 H4.2 M14.2 10.8 V12 Q14.2 14.2 12 14.2 H10.8 M9.2 5.8 L14 1 M10.2 0.8 H14.2 V4.8 M5.8 9.2 L1 14 M0.8 10.2 V14.2 H4.8"/></svg>
</body>
</html>
